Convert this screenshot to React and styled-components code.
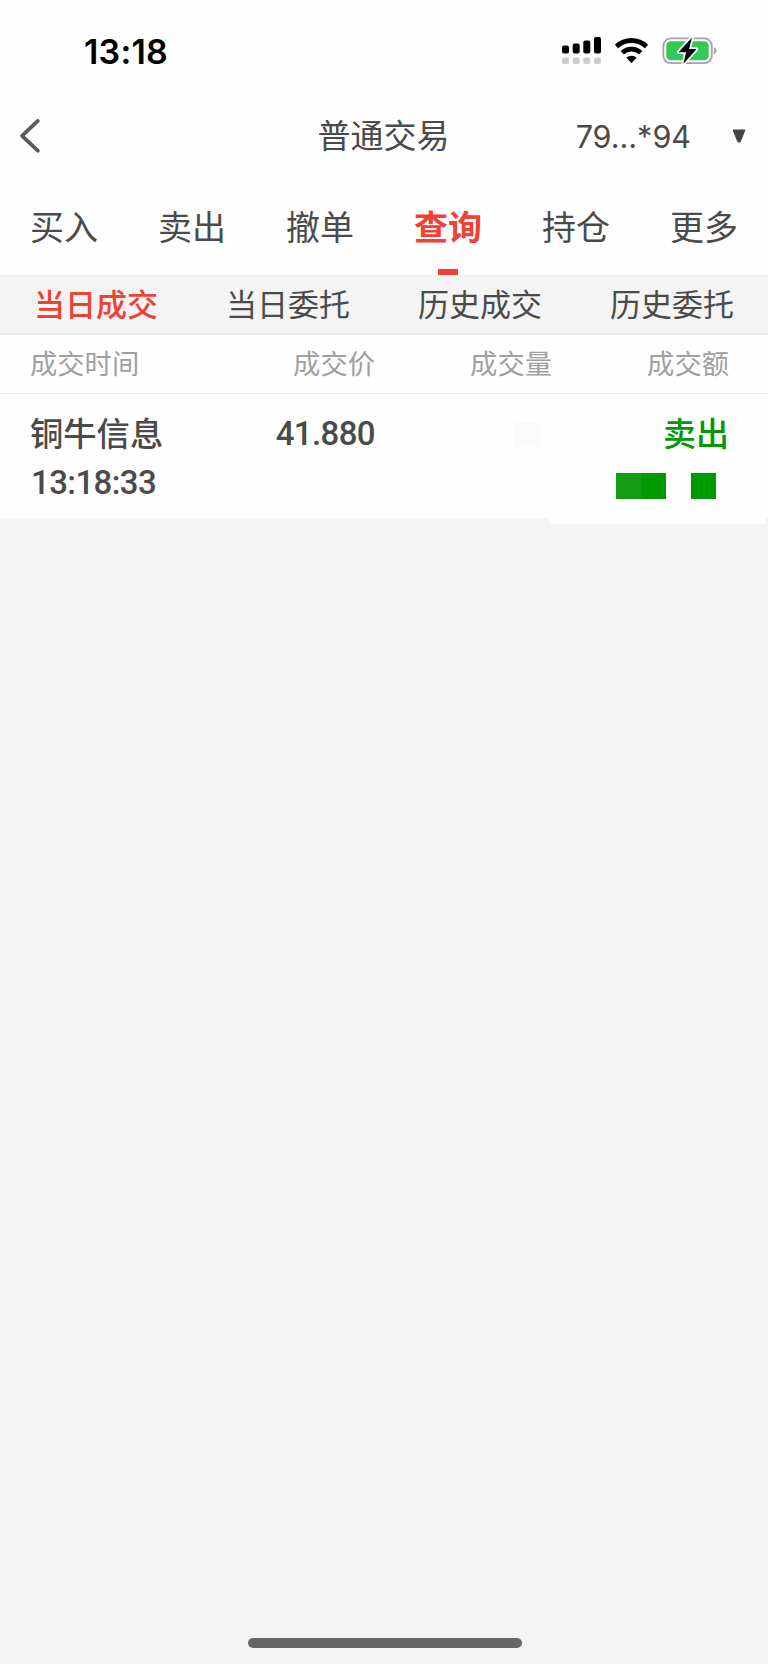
import { useState } from "react";
import styled, { createGlobalStyle } from "styled-components";

const GlobalStyle = createGlobalStyle`
  * {
    box-sizing: border-box;
  }

  body {
    margin: 0;
    background: #f4f4f4;
    font-family: Inter, "Noto Sans CJK SC", sans-serif;
    color: #4a4a4a;
  }
`;

const Screen = styled.div`
  display: flex;
  flex-direction: column;
  width: 768px;
  height: 1664px;
  background: #f4f4f4;
  overflow: hidden;
`;

const StatusBar = styled.header`
  display: flex;
  align-items: center;
  justify-content: space-between;
  height: 102px;
  padding: 0 50px 0 84px;
  background: #fefefe;
`;

const Clock = styled.span`
  font-size: 34px;
  font-weight: 600;
  letter-spacing: 0.2px;
  color: #000;
`;

const StatusIcons = styled.svg`
  display: block;
  width: 158px;
  height: 40px;
`;

const NavBar = styled.div`
  display: grid;
  grid-template-columns: 1fr auto 1fr;
  align-items: center;
  height: 68px;
  padding: 0 22px 0 18px;
  background: #fefefe;
`;

const BackButton = styled.button`
  display: flex;
  width: 26px;
  padding: 0;
  border: none;
  background: none;
  cursor: pointer;
`;

const Title = styled.h1`
  margin: 0;
  padding-left: 3px;
  font-size: 33px;
  line-height: 40px;
  font-weight: 400;
`;

const Account = styled.div`
  display: flex;
  align-items: center;
  justify-content: flex-end;
  gap: 41px;
  font-size: 30.5px;
`;

const Tabs = styled.nav`
  display: grid;
  grid-template-columns: repeat(6, 1fr);
  height: 105px;
  background: #fefefe;
`;

const Tab = styled.button`
  display: flex;
  flex-direction: column;
  align-items: center;
  justify-content: space-between;
  padding: 38px 0 0;
  border: none;
  background: none;
  font-family: inherit;
  font-size: 34px;
  line-height: 40px;
  font-weight: ${(props) => (props.$active ? 700 : 400)};
  color: ${(props) => (props.$active ? "#f04134" : "#4a4a4a")};
  cursor: pointer;

  &::after {
    content: "";
    width: 20px;
    height: 6px;
    background: ${(props) => (props.$active ? "#f04134" : "transparent")};
  }
`;

const SubTabs = styled.div`
  display: grid;
  grid-template-columns: repeat(4, 1fr);
  height: 60px;
  border-top: 1px solid #eeeeee;
  border-bottom: 2px solid #ececec;
  background: #f4f4f4;
`;

const SubTab = styled.button`
  padding: 1px 0 0;
  border: none;
  background: none;
  font-family: inherit;
  font-size: 31px;
  line-height: 56px;
  font-weight: ${(props) => (props.$active ? 500 : 400)};
  color: ${(props) => (props.$active ? "#f04134" : "#4a4a4a")};
  cursor: pointer;
`;

const Columns = styled.div`
  display: grid;
  grid-template-columns: 168px 177px 177px 177px;
  padding-left: 30px;
  background: #fefefe;
`;

const HeaderRow = styled(Columns)`
  height: 59px;
  border-bottom: 1px solid #e8e8e8;
  font-size: 27.3px;
  line-height: 60px;
  color: #a0a0a0;
`;

const HeaderCell = styled.span`
  text-align: ${(props) => props.$align || "right"};
`;

const TradeRow = styled(Columns)`
  position: relative;
  height: 124px;
  padding-top: 20px;
`;

const Cell = styled.div`
  display: flex;
  flex-direction: column;
  align-items: ${(props) => (props.$align === "left" ? "flex-start" : "flex-end")};
`;

const StockName = styled.span`
  font-size: 33.3px;
  line-height: 40px;
  font-weight: 500;
  white-space: nowrap;
`;

const Figure = styled.span`
  font-family: Roboto, sans-serif;
  font-size: 33px;
  line-height: 40px;
  font-weight: 500;
  letter-spacing: -0.6px;
  white-space: nowrap;
`;

const TimeFigure = styled(Figure)`
  margin: 9px 0 0 1px;
`;

const Side = styled.span`
  font-size: 33px;
  line-height: 40px;
  font-weight: 500;
  color: #009900;
`;

const Mask = styled.div`
  display: flex;
  margin: ${(props) => props.$margin};
`;

const Block = styled.i`
  width: 25px;
  height: ${(props) => props.$height || 26}px;
  background: ${(props) => props.$color || "transparent"};
`;

const RowTail = styled.div`
  position: absolute;
  top: 124px;
  left: 548px;
  width: 218px;
  height: 6px;
  background: #fefefe;
  border-radius: 0 0 3px 6px;
`;

const HomeIndicator = styled.div`
  width: 274px;
  height: 10px;
  margin: auto auto 16px 248px;
  border-radius: 5px;
  background: #666666;
`;

const tabs = ["买入", "卖出", "撤单", "查询", "持仓", "更多"];
const subTabs = ["当日成交", "当日委托", "历史成交", "历史委托"];

function StatusGlyphs() {
  return (
    <StatusIcons viewBox="560 31 158 40">
      <g fill="#000">
        <rect x="562" y="45.5" width="7" height="8" rx="2" />
        <rect x="572.7" y="43.5" width="7" height="10" rx="2" />
        <rect x="583.3" y="40.5" width="7" height="13" rx="2" />
        <rect x="594" y="37" width="7" height="16.5" rx="2" />
      </g>
      <g fill="#cbcbcb">
        <rect x="562" y="57.5" width="7" height="6.5" rx="2" />
        <rect x="572.7" y="57.5" width="7" height="6.5" rx="2" />
        <rect x="583.3" y="57.5" width="7" height="6.5" rx="2" />
        <rect x="594" y="57.5" width="7" height="6.5" rx="2" />
      </g>
      <g fill="none" stroke="#000" strokeWidth="4.8">
        <path d="M616.5 46.5a21.8 21.8 0 0 1 30 0" />
        <path d="M622.3 52.8a13.2 13.2 0 0 1 18.4 0" />
      </g>
      <path d="M626.3 57.7a7.7 7.7 0 0 1 10.4 0l-5.2 5.3z" fill="#000" />
      <rect x="663.4" y="38.4" width="48.4" height="24.8" rx="7.5" fill="#fefefe" stroke="#a4a4a4" strokeWidth="1.8" />
      <rect x="666.3" y="41.3" width="42.4" height="19" rx="4.5" fill="#34c759" />
      <path d="M713.9 47.2c3.4 1.2 3.4 6 0 7.2z" fill="#a4a4a4" />
      <path
        d="M692 37.5l-13.5 14.7h7.6l-2.8 11.8 13.3-15h-7.5z"
        fill="#000"
        stroke="#fefefe"
        strokeWidth="3.4"
        strokeLinejoin="round"
        paintOrder="stroke"
      />
    </StatusIcons>
  );
}

export default function App() {
  const [tab, setTab] = useState("查询");
  const [subTab, setSubTab] = useState("当日成交");

  return (
    <Screen>
      <GlobalStyle />
      <StatusBar>
        <Clock>13:18</Clock>
        <StatusGlyphs />
      </StatusBar>

      <NavBar>
        <BackButton>
          <svg width="26" height="40" viewBox="0 0 26 40">
            <path
              d="M19.8 4.9L4 19.8l15.8 14.9"
              fill="none"
              stroke="#5a5a5a"
              strokeWidth="3.8"
              strokeLinecap="round"
              strokeLinejoin="round"
            />
          </svg>
        </BackButton>
        <Title>普通交易</Title>
        <Account>
          <span>79...*94</span>
          <svg width="14" height="14" viewBox="0 0 14 14">
            <path d="M1 1h12L8 13H6z" fill="#444" stroke="#444" strokeLinejoin="round" />
          </svg>
        </Account>
      </NavBar>

      <Tabs>
        {tabs.map((name) => (
          <Tab key={name} $active={name === tab} onClick={() => setTab(name)}>
            {name}
          </Tab>
        ))}
      </Tabs>

      <SubTabs>
        {subTabs.map((name) => (
          <SubTab key={name} $active={name === subTab} onClick={() => setSubTab(name)}>
            {name}
          </SubTab>
        ))}
      </SubTabs>

      <HeaderRow>
        <HeaderCell $align="left">成交时间</HeaderCell>
        <HeaderCell>成交价</HeaderCell>
        <HeaderCell>成交量</HeaderCell>
        <HeaderCell>成交额</HeaderCell>
      </HeaderRow>

      <TradeRow>
        <Cell $align="left">
          <StockName>铜牛信息</StockName>
          <TimeFigure>13:18:33</TimeFigure>
        </Cell>
        <Cell>
          <Figure>41.880</Figure>
        </Cell>
        <Cell>
          <Mask $margin="8px 12px 0 0">
            <Block $height={25} $color="#fafafa" />
          </Mask>
        </Cell>
        <Cell>
          <Side>卖出</Side>
          <Mask $margin="19px 13px 0 0">
            <Block $color="#149c14" />
            <Block $color="#009900" />
            <Block />
            <Block $color="#009900" />
          </Mask>
        </Cell>
        <RowTail />
      </TradeRow>

      <HomeIndicator />
    </Screen>
  );
}
